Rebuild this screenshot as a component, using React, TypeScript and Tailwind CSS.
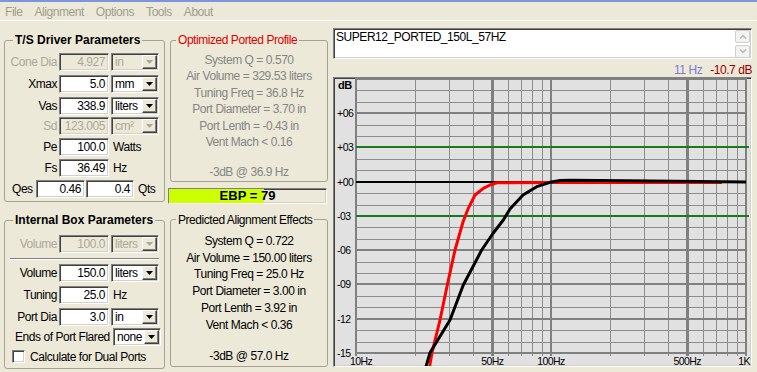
import React from "react";

const sunken =
  "border border-t-[#808080] border-l-[#808080] border-r-white border-b-white shadow-[inset_1px_1px_0_#404040,inset_-1px_-1px_0_#d4d0c8]";

function Field({ v, w, dis }: { v: string; w: string; dis?: boolean }) {
  return (
    <div
      className={`${w} h-[18px] ${sunken} flex items-center justify-end pr-[3px] leading-none ${
        dis ? "bg-[#ece9d8] text-[#aca899]" : "bg-white text-black"
      }`}
    >
      {v}
    </div>
  );
}

function Combo({ v, dis }: { v: string; dis?: boolean }) {
  return (
    <div
      className={`ml-[2px] w-[48px] h-[18px] ${sunken} flex items-center leading-none ${
        dis ? "bg-[#ece9d8] text-[#aca899]" : "bg-white text-black"
      }`}
    >
      <span className="flex-1 pl-[3px]">{v}</span>
      <div className="w-[15px] h-[14px] mr-[1px] bg-[#ece9d8] border border-t-white border-l-white border-r-[#404040] border-b-[#404040] shadow-[inset_-1px_-1px_0_#808080] flex items-center justify-center">
        <svg width="7" height="4" viewBox="0 0 7 4">
          <polygon points="0,0 7,0 3.5,4" fill={dis ? "#aca899" : "#000000"} />
        </svg>
      </div>
    </div>
  );
}

function Label({ t, dis }: { t: string; dis?: boolean }) {
  return (
    <span className={`w-[54px] shrink-0 text-right pr-[2px] leading-none ${dis ? "text-[#aca899]" : ""}`}>{t}</span>
  );
}

const X0 = 22;
const DEC = 195;
const fx = (f: number) => X0 + DEC * Math.log10(f / 10);
const fy = (d: number) => 103.7 - 11.42 * d;

const blackPts: [number, number][] = [
  [91, 292], [96, 274.7], [116, 242], [129.3, 207], [147.7, 172], [159.3, 155], [169.3, 142],
  [176, 131], [189, 117], [202.7, 108.7], [216, 104.3], [226, 102.6], [236, 102.3], [292.7, 102.8], [412, 104],
];
const redPts: [number, number][] = [
  [95, 292], [98, 274.7], [106, 242], [113.3, 207], [121, 172], [129, 144], [134.3, 130.3], [141, 117],
  [149.3, 110.3], [156, 107], [162.7, 104.8], [216, 104.6], [388, 104.6],
];

function Chart() {
  const minorF = [20, 30, 40, 60, 70, 80, 90, 200, 300, 400, 600, 700, 800, 900];
  const majorF = [10, 50, 100, 500, 1000];
  const dbs: number[] = [];
  for (let d = 9; d >= -15; d--) dbs.push(d);
  const x1 = fx(1000);
  const yTop = fy(9);
  const yBot = fy(-15) + 3;
  const labels = [6, 3, 0, -3, -6, -9, -12, -15];
  const lab = (d: number) => (d > 0 ? "+0" + d : d === 0 ? "+00" : d > -10 ? "-0" + -d : "" + d);
  const ff = "'Liberation Sans', Arial, sans-serif";
  return (
    <svg width="417" height="288" viewBox="0 0 417 288" className="block">
      {dbs.map((d) =>
        d % 3 !== 0 ? (
          <line key={"h" + d} x1={X0} x2={x1} y1={Math.round(fy(d)) + 0.5} y2={Math.round(fy(d)) + 0.5} stroke="#8c8c8c" strokeWidth="1" shapeRendering="crispEdges" />
        ) : null
      )}
      {minorF.map((f) => (
        <line key={"v" + f} x1={Math.round(fx(f)) + 0.5} x2={Math.round(fx(f)) + 0.5} y1={yTop} y2={yBot} stroke="#8c8c8c" strokeWidth="1" shapeRendering="crispEdges" />
      ))}
      {dbs.map((d) =>
        d % 3 === 0 && d !== 3 && d !== -3 && d !== 0 ? (
          <line key={"H" + d} x1={X0} x2={x1} y1={fy(d)} y2={fy(d)} stroke="#808080" strokeWidth="2" shapeRendering="crispEdges" />
        ) : null
      )}
      {majorF.map((f) => (
        <line key={"V" + f} x1={fx(f)} x2={fx(f)} y1={yTop - 1} y2={yBot} stroke="#808080" strokeWidth="2.5" shapeRendering="crispEdges" />
      ))}
      <line x1={X0} x2={x1 + 3} y1={fy(3)} y2={fy(3)} stroke="#1a7a1a" strokeWidth="2" shapeRendering="crispEdges" />
      <line x1={X0} x2={x1 + 3} y1={fy(-3)} y2={fy(-3)} stroke="#1a7a1a" strokeWidth="2" shapeRendering="crispEdges" />
      <line x1={X0} x2={x1} y1={fy(0)} y2={fy(0)} stroke="#000000" strokeWidth="2" shapeRendering="crispEdges" />
      <polyline points={redPts.map((p) => p.join(",")).join(" ")} fill="none" stroke="#ff0000" strokeWidth="3" strokeLinejoin="round" />
      <polyline points={blackPts.map((p) => p.join(",")).join(" ")} fill="none" stroke="#000000" strokeWidth="3" strokeLinejoin="round" />
      <text x="4" y="11" fontFamily={ff} fontWeight="bold" fontSize="11" fill="#000">
        dB
      </text>
      {labels.map((d) => (
        <text key={"l" + d} x="3" y={fy(d) + 4} fontFamily={ff} fontSize="10.5" letterSpacing="-0.5" fill="#000">
          {lab(d)}
        </text>
      ))}
      <g fontFamily={ff} fontSize="10.5" letterSpacing="-0.6" fill="#000">
        <text x="16" y="287">10Hz</text>
        <text x={fx(50)} y="287" textAnchor="middle">50Hz</text>
        <text x={fx(100)} y="287" textAnchor="middle">100Hz</text>
        <text x={fx(500)} y="287" textAnchor="middle">500Hz</text>
        <text x="416" y="287" textAnchor="end">1K</text>
      </g>
    </svg>
  );
}

function ScrollBtn({ up }: { up?: boolean }) {
  return (
    <div className="w-[15px] h-[13px] bg-[#f3f3ef] border border-[#cdd0d8] rounded-[2px] flex items-center justify-center">
      <svg width="8" height="5" viewBox="0 0 8 5">
        <polyline points={up ? "1,4.5 4,1.5 7,4.5" : "1,0.5 4,3.5 7,0.5"} fill="none" stroke="#b8b8b8" strokeWidth="1.5" />
      </svg>
    </div>
  );
}

export default function App() {
  return (
    <div className="w-[757px] h-[372px] overflow-hidden bg-[#ece9d8] flex flex-col whitespace-nowrap font-['Liberation_Sans',Arial,sans-serif] text-[12px] tracking-[-0.45px] text-black">
      <div className="h-[2px] shrink-0 bg-[#7a96df]" />
      <div className="h-[18px] shrink-0 flex items-center pl-[5px] gap-[12px] text-[#a09d8f] leading-none pt-[1px]">
        <span>File</span>
        <span>Alignment</span>
        <span>Options</span>
        <span>Tools</span>
        <span>About</span>
      </div>
      <div className="h-[1px] shrink-0 bg-white" />
      <div className="flex flex-1 min-h-0">
        {/* Left column */}
        <div className="w-[165px] shrink-0 pl-[4px] flex flex-col">
          <fieldset className="mt-[12px] w-[161px] border border-[#a5a294] rounded-[3px] pb-[3px]">
            <legend className="ml-[8px] px-[2px] font-bold text-[12px] tracking-normal leading-[14px]">
              T/S Driver Parameters
            </legend>
            <div className="pt-[6px] flex flex-col">
              <div className="flex items-center h-[18px]">
                <Label t="Cone Dia" dis />
                <Field v="4.927" w="w-[50px]" dis />
                <Combo v="in" dis />
              </div>
              <div className="flex items-center h-[18px] mt-[4px]">
                <Label t="Xmax" />
                <Field v="5.0" w="w-[50px]" />
                <Combo v="mm" />
              </div>
              <div className="flex items-center h-[18px] mt-[4px]">
                <Label t="Vas" />
                <Field v="338.9" w="w-[50px]" />
                <Combo v="liters" />
              </div>
              <div className="flex items-center h-[18px] mt-[2px]">
                <Label t="Sd" dis />
                <Field v="123.005" w="w-[50px]" dis />
                <Combo v="cm²" dis />
              </div>
              <div className="flex items-center h-[18px] mt-[3px]">
                <Label t="Pe" />
                <Field v="100.0" w="w-[50px]" />
                <span className="ml-[4px] leading-none">Watts</span>
              </div>
              <div className="flex items-center h-[18px] mt-[3px]">
                <Label t="Fs" />
                <Field v="36.49" w="w-[50px]" />
                <span className="ml-[4px] leading-none">Hz</span>
              </div>
              <div className="flex items-center h-[18px] mt-[3px]">
                <span className="w-[31px] shrink-0 pl-[7px] leading-none">Qes</span>
                <Field v="0.46" w="w-[49px]" />
                <div className="ml-[1px]">
                  <Field v="0.4" w="w-[48px]" />
                </div>
                <span className="ml-[4px] leading-none">Qts</span>
              </div>
            </div>
          </fieldset>

          <fieldset className="mt-[11px] w-[161px] border border-[#a5a294] rounded-[3px] pb-[4px]">
            <legend className="ml-[8px] px-[2px] font-bold text-[12px] tracking-normal leading-[14px]">
              Internal Box Parameters
            </legend>
            <div className="pt-[8px] flex flex-col">
              <div className="flex items-center h-[18px]">
                <Label t="Volume" dis />
                <Field v="100.0" w="w-[50px]" dis />
                <Combo v="liters" dis />
              </div>
              <div className="mt-[5px] mx-[5px] h-[2px] border-t border-t-[#808080] border-b border-b-white" />
              <div className="flex items-center h-[18px] mt-[4px]">
                <Label t="Volume" />
                <Field v="150.0" w="w-[50px]" />
                <Combo v="liters" />
              </div>
              <div className="flex items-center h-[18px] mt-[4px]">
                <Label t="Tuning" />
                <Field v="25.0" w="w-[50px]" />
                <span className="ml-[4px] leading-none">Hz</span>
              </div>
              <div className="flex items-center h-[18px] mt-[4px]">
                <Label t="Port Dia" />
                <Field v="3.0" w="w-[50px]" />
                <Combo v="in" />
              </div>
              <div className="flex items-center h-[18px] mt-[2px]">
                <span className="w-[106px] shrink-0 pl-[10px] leading-none">Ends of Port Flared</span>
                <Combo v="none" />
              </div>
              <div className="flex items-center h-[15px] mt-[3px]">
                <div className={`ml-[7px] w-[13px] h-[13px] bg-white ${sunken}`} />
                <span className="ml-[5px] leading-none">Calculate for Dual Ports</span>
              </div>
            </div>
          </fieldset>
        </div>

        {/* Middle column */}
        <div className="ml-[3px] w-[160px] shrink-0 flex flex-col">
          <fieldset className="ml-[2px] mt-[12px] w-[158px] border border-[#a5a294] rounded-[3px]">
            <legend className="ml-[5px] px-[2px] text-[#e00000] leading-[14px]">Optimized Ported Profile</legend>
            <div className="pt-[5px] text-center text-[#858585] leading-[16.4px]">
              <div>System Q = 0.570</div>
              <div>Air Volume = 329.53 liters</div>
              <div>Tuning Freq = 36.8 Hz</div>
              <div>Port Diameter = 3.70 in</div>
              <div>Port Lenth = -0.43 in</div>
              <div>Vent Mach &lt; 0.16</div>
              <div className="mt-[14px]">-3dB @ 36.9 Hz</div>
            </div>
          </fieldset>

          <div className={`relative mt-[6px] w-[159px] h-[16px] ${sunken} bg-[#ece9d8] flex`}>
            <div className="w-[95px] h-full bg-[#ccff00]" />
            <span className="absolute inset-0 flex items-center justify-center font-bold text-[13px] tracking-normal leading-none">
              EBP = 79
            </span>
          </div>

          <fieldset className="ml-[2px] mt-[9px] w-[158px] border border-[#a5a294] rounded-[3px] pb-[2px]">
            <legend className="ml-[5px] px-[2px] leading-[14px]">Predicted Alignment Effects</legend>
            <div className="pt-[6px] text-center leading-[16.8px]">
              <div>System Q = 0.722</div>
              <div>Air Volume = 150.00 liters</div>
              <div>Tuning Freq = 25.0 Hz</div>
              <div>Port Diameter = 3.00 in</div>
              <div>Port Lenth = 3.92 in</div>
              <div>Vent Mach &lt; 0.36</div>
              <div className="mt-[14px]">-3dB @ 57.0 Hz</div>
            </div>
          </fieldset>
        </div>

        {/* Right column */}
        <div className="ml-[4px] w-[420px] shrink-0 pt-[7px] flex flex-col">
          <div className={`ml-[1px] w-[419px] h-[31px] shrink-0 ${sunken} bg-white flex`}>
            <div className="flex-1 pl-[2px] pt-[1px] leading-[14px]">SUPER12_PORTED_150L_57HZ</div>
            <div className="w-[15px] mr-[1px] pt-[1px] flex flex-col gap-[2px]">
              <ScrollBtn up />
              <ScrollBtn />
            </div>
          </div>
          <div className="h-[18px] shrink-0 flex justify-end items-end leading-[14px]">
            <span className="text-[#7b7bd4]">11 Hz</span>
            <span className="ml-[8px] text-[#9a0000]">-10.7 dB</span>
          </div>
          <div className={`ml-[1px] w-[419px] h-[290px] shrink-0 ${sunken} bg-[#e1e1e1] overflow-hidden`}>
            <Chart />
          </div>
        </div>
      </div>
    </div>
  );
}
